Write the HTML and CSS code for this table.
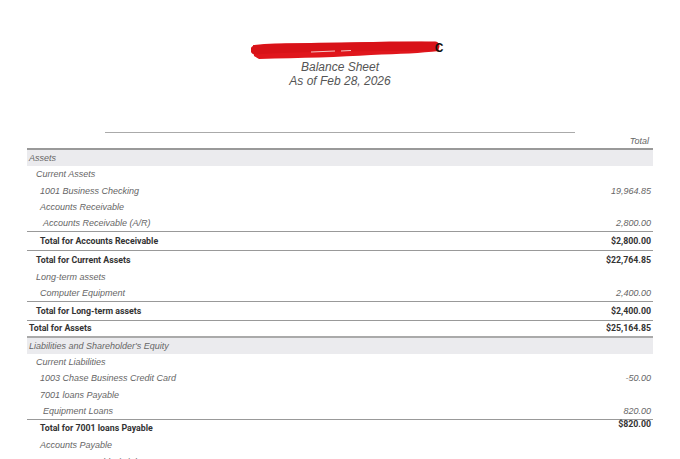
FILE: index.html
```html
<!DOCTYPE html>
<html lang="en">
<head>
    <meta charset="UTF-8">
    <title>Balance Sheet</title>
    <link rel="stylesheet" href="styles.css">
</head>
<body>
    <div class="report">
        <div class="report-head">
            <div class="company">
                <svg class="redact" width="192" height="22" viewBox="0 0 192 22">
                    <path d="M2 7 C30 4, 60 6, 90 5 C120 4, 150 3, 186 4 L188 13 C170 15, 150 16, 120 17 C90 19, 50 20, 8 21 L3 18 Z" fill="#e0161c"/>
                    <path d="M4 12 C50 8, 120 9, 184 8" stroke="#d81218" stroke-width="9" fill="none" stroke-linecap="round"/>
                    <path d="M60 14 L84 13 M90 13 L100 12.5" stroke="#f6c4c4" stroke-width="1" fill="none"/>
                </svg>
                <span class="company-end">C</span>
            </div>
            <div class="report-title">Balance Sheet</div>
            <div class="report-date">As of Feb 28, 2026</div>
        </div>

        <div class="col-rule"></div>

        <div class="sheet">
            <div class="row header"><span></span><span class="val">Total</span></div>

            <div class="row section"><span>Assets</span><span></span></div>
            <div class="row l1"><span>Current Assets</span><span></span></div>
            <div class="row l2"><span>1001 Business Checking</span><span class="val">19,964.85</span></div>
            <div class="row l2"><span>Accounts Receivable</span><span></span></div>
            <div class="row l3 ruled"><span>Accounts Receivable (A/R)</span><span class="val">2,800.00</span></div>
            <div class="row total l2 ruled"><span>Total for Accounts Receivable</span><span class="val">$2,800.00</span></div>
            <div class="row total l1"><span>Total for Current Assets</span><span class="val">$22,764.85</span></div>
            <div class="row l1"><span>Long-term assets</span><span></span></div>
            <div class="row l2 ruled"><span>Computer Equipment</span><span class="val">2,400.00</span></div>
            <div class="row total l1 ruled"><span>Total for Long-term assets</span><span class="val">$2,400.00</span></div>
            <div class="row total grand"><span>Total for Assets</span><span class="val">$25,164.85</span></div>

            <div class="row section"><span>Liabilities and Shareholder's Equity</span><span></span></div>
            <div class="row l1"><span>Current Liabilities</span><span></span></div>
            <div class="row l2"><span>1003 Chase Business Credit Card</span><span class="val">-50.00</span></div>
            <div class="row l2"><span>7001 loans Payable</span><span></span></div>
            <div class="row l3 ruled"><span>Equipment Loans</span><span class="val">820.00</span></div>
            <div class="row total l2 raised"><span>Total for 7001 loans Payable</span><span class="val">$820.00</span></div>
            <div class="row l2"><span>Accounts Payable</span><span></span></div>
            <div class="row l3"><span>Accounts Payable (A/P)</span><span class="val">900.00</span></div>
        </div>
    </div>
</body>
</html>
```

FILE: styles.css
```css
* {
    margin: 0;
    padding: 0;
    box-sizing: border-box;
}

body {
    background: white;
    font-family: 'Liberation Sans', Arial, sans-serif;
    color: #555;
    overflow: hidden;
}

.report {
    width: 680px;
    padding-top: 38px;
}

.report-head {
    text-align: center;
    font-style: italic;
    color: #555;
    font-size: 12px;
    line-height: 14px;
}

.company {
    display: flex;
    justify-content: center;
    align-items: center;
    height: 22px;
    margin-left: 14px;
}

.redact {
    display: block;
}

.company-end {
    font-style: normal;
    font-weight: bold;
    color: #111;
    font-size: 12px;
    margin-left: -8px;
    margin-top: -2px;
}

.col-rule {
    width: 470px;
    margin: 44px 0 0 105px;
    border-top: 1px solid #aaa;
}

.sheet {
    width: 626px;
    margin-left: 27px;
}

.row {
    display: flex;
    justify-content: space-between;
    align-items: center;
    height: 16.5px;
    font-size: 9px;
    font-style: italic;
    color: #666;
    padding-right: 2px;
}

.row.header {
    height: 17px;
    border-bottom: 2px solid #999;
    padding-right: 4px;
}

.row.section {
    background: #ebebee;
    padding-left: 2px;
    height: 16px;
}

.row.l1 {
    padding-left: 9px;
}

.row.l2 {
    padding-left: 13px;
}

.row.l3 {
    padding-left: 16px;
}

.row.ruled {
    border-bottom: 1px solid #999;
}

.row.total {
    font-family: 'Roboto', 'Noto Sans', sans-serif;
    font-style: normal;
    font-weight: bold;
    font-size: 8.8px;
    color: #333;
    height: 18.5px;
}

.row.grand {
    padding-left: 2px;
    height: 17px;
    border-bottom: 2px solid #aaa;
}

.row.raised {
    align-items: flex-start;
    height: 17.5px;
}

.row.raised span:first-child {
    padding-top: 3px;
}

.row.raised .val {
    margin-top: -1px;
}

.val {
    text-align: right;
}
```
